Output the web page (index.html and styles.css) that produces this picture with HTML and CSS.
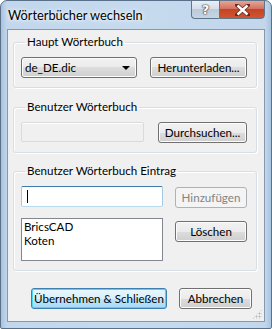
FILE: index.html
```html
<!DOCTYPE html>
<html lang="de">
<head>
    <meta charset="UTF-8">
    <title>Wörterbücher wechseln</title>
    <link rel="stylesheet" href="styles.css">
</head>
<body>
    <div class="window">
        <div class="titlebar">
            <div class="title">Wörterbücher wechseln</div>
            <div class="controls">
                <div class="ctl help">?</div>
                <div class="ctl close">
                    <svg width="15" height="12" viewBox="0 0 15 12">
                        <path d="M2 1 L13 11 M13 1 L2 11" stroke="#6b2a20" stroke-width="4" stroke-linecap="square"/>
                        <path d="M2.5 1.5 L12.5 10.5 M12.5 1.5 L2.5 10.5" stroke="#fff" stroke-width="2.4"/>
                    </svg>
                </div>
            </div>
        </div>
        <div class="client">
            <fieldset class="group">
                <legend>Haupt Wörterbuch</legend>
                <div class="row">
                    <div class="combo">
                        <span>de_DE.dic</span>
                        <span class="arrow"></span>
                    </div>
                    <button class="btn w-herunter">Herunterladen...</button>
                </div>
            </fieldset>
            <fieldset class="group second">
                <legend>Benutzer Wörterbuch</legend>
                <div class="row">
                    <div class="textbox disabled w-path"></div>
                    <button class="btn w-durch">Durchsuchen...</button>
                </div>
            </fieldset>
            <fieldset class="group third">
                <legend>Benutzer Wörterbuch Eintrag</legend>
                <div class="row">
                    <div class="textbox focused w-entry"><span class="caret"></span></div>
                    <button class="btn w-side" disabled>Hinzufügen</button>
                </div>
                <div class="row list-row">
                    <div class="listbox">
                        <div>BricsCAD</div>
                        <div>Koten</div>
                    </div>
                    <button class="btn w-side loeschen">Löschen</button>
                </div>
            </fieldset>
            <div class="actions">
                <button class="btn default w-ok">Übernehmen &amp; Schließen</button>
                <button class="btn w-cancel">Abbrechen</button>
            </div>
            <div class="grip"></div>
        </div>
    </div>
</body>
</html>
```

FILE: styles.css
```css
* {
    margin: 0;
    padding: 0;
    box-sizing: border-box;
}
body {
    font-family: Lato, "Noto Sans", sans-serif;
    font-size: 11.6px;
    color: #000;
    background: #fff;
    width: 272px;
    height: 329px;
    white-space: nowrap;
}
.window {
    width: 272px;
    height: 329px;
    border: 1px solid #5a7089;
    border-radius: 7px 7px 2px 2px;
    background: linear-gradient(to right, #a9c3de 0, #c2d7ec 6px, #c6daee 50%, #c2d7ec calc(100% - 6px), #a9c3de 100%);
    padding: 0 6px 6px 6px;
    display: flex;
    flex-direction: column;
}
.titlebar {
    height: 22px;
    display: flex;
    justify-content: space-between;
    align-items: flex-start;
}
.title {
    font-size: 12.8px;
    padding: 6px 0 0 1px;
    text-shadow: 0 0 6px #fff, 0 0 3px #fff;
}
.controls {
    display: flex;
    margin-top: -1px;
}
.ctl {
    height: 19px;
    border: 1px solid #5f7589;
    display: flex;
    align-items: center;
    justify-content: center;
}
.help {
    width: 28px;
    border-right: none;
    border-radius: 0 0 0 4px;
    background: linear-gradient(#e9eff5 0, #d4dfea 45%, #bccbda 50%, #c6d5e3 100%);
    color: #fff;
    font-family: "DejaVu Sans", sans-serif;
    font-weight: bold;
    font-size: 13px;
    text-shadow: 0 0 1px #333, 0 0 1px #333, 0 0 2px #555;
}
.close {
    width: 46px;
    border-radius: 0 0 4px 0;
    background: linear-gradient(#e8a495 0, #d6725f 45%, #c34528 50%, #d2542f 100%);
}
.client {
    flex: 1;
    margin-top: 6px;
    border: 1px solid #8499b0;
    background: #f0f0f0;
    padding: 4px 5px 0 5px;
    display: flex;
    flex-direction: column;
    position: relative;
}
.group {
    border: 1px solid #d5dfe5;
    border-radius: 3px;
    box-shadow: inset 1px 1px 0 #fff, 1px 1px 0 #fff;
    padding: 7px 9px 9px 7px;
    width: 244px;
}
.group legend {
    padding: 0 2px;
    margin-left: 4px;
    line-height: 16px;
}
.group.second {
    margin-top: 11px;
}
.group.third {
    margin-top: 10px;
}
.row {
    display: flex;
    justify-content: space-between;
    align-items: flex-start;
    height: 21px;
}
.list-row {
    margin-top: 11px;
    height: 43px;
}
.btn {
    font-family: inherit;
    font-size: inherit;
    color: #000;
    height: 21px;
    border: 1px solid #707070;
    border-radius: 3px;
    background: linear-gradient(#f2f2f2 0, #ebebeb 50%, #dddddd 50%, #cfcfcf 100%);
    box-shadow: inset 0 0 0 1px #fcfcfc;
    line-height: 17px;
}
.btn:disabled {
    border-color: #adb2b5;
    background: #f4f4f4;
    box-shadow: none;
    color: #838383;
}
.btn.default {
    border-color: #3c7fb1;
    box-shadow: inset 0 0 0 1px #48d8fb;
    background: linear-gradient(#eaf6fd 0, #d9f0fc 50%, #bee6fd 50%, #a7d9f5 100%);
}
.w-herunter {
    width: 97px;
}
.w-durch {
    width: 89px;
}
.w-side {
    width: 72px;
    margin-top: 1px;
}
.loeschen {
    margin-top: 3px;
}
.w-ok {
    width: 136px;
}
.w-cancel {
    width: 73px;
}
.combo {
    width: 116px;
    height: 21px;
    border: 1px solid #707070;
    border-radius: 3px;
    background: linear-gradient(#f2f2f2 0, #ebebeb 50%, #dddddd 50%, #cfcfcf 100%);
    box-shadow: inset 0 0 0 1px #fcfcfc;
    display: flex;
    align-items: center;
    justify-content: space-between;
    padding: 0 6px 0 3px;
}
.arrow {
    width: 0;
    height: 0;
    border-left: 4px solid transparent;
    border-right: 4px solid transparent;
    border-top: 4px solid #000;
}
.textbox {
    height: 20px;
    border: 1px solid #abadb3;
    border-top-color: #e3e9ef;
    border-left-color: #e2e3ea;
    border-right-color: #dbdfe6;
    border-bottom-color: #e3e9ef;
    border-radius: 2px;
    background: #fff;
}
.textbox.disabled {
    background: #f0f0f0;
    border-color: #dadada;
    box-shadow: inset 0 1px 0 #fff;
}
.textbox.focused {
    border-color: #569de5;
    border-top-color: #3d7bad;
    border-left-color: #a4c9e3;
    border-right-color: #a4c9e3;
    border-bottom-color: #b7d9ed;
}
.caret {
    display: block;
    width: 1px;
    height: 13px;
    background: #000;
    margin: 3px 0 0 5px;
}
.w-path {
    width: 123px;
}
.w-entry {
    width: 142px;
    height: 21px;
}
.listbox {
    width: 142px;
    height: 43px;
    border: 1px solid #828790;
    background: #fff;
    padding: 1px 0 0 2px;
    line-height: 14px;
}
.actions {
    display: flex;
    gap: 12px;
    margin-top: 17px;
    padding-left: 18px;
}
.grip {
    position: absolute;
    right: 2px;
    bottom: 2px;
    width: 10px;
    height: 10px;
    background: radial-gradient(circle, #b8b8b8 0.8px, transparent 1.2px) 0 0 / 3px 3px;
    clip-path: polygon(100% 0, 100% 100%, 0 100%);
}
```
